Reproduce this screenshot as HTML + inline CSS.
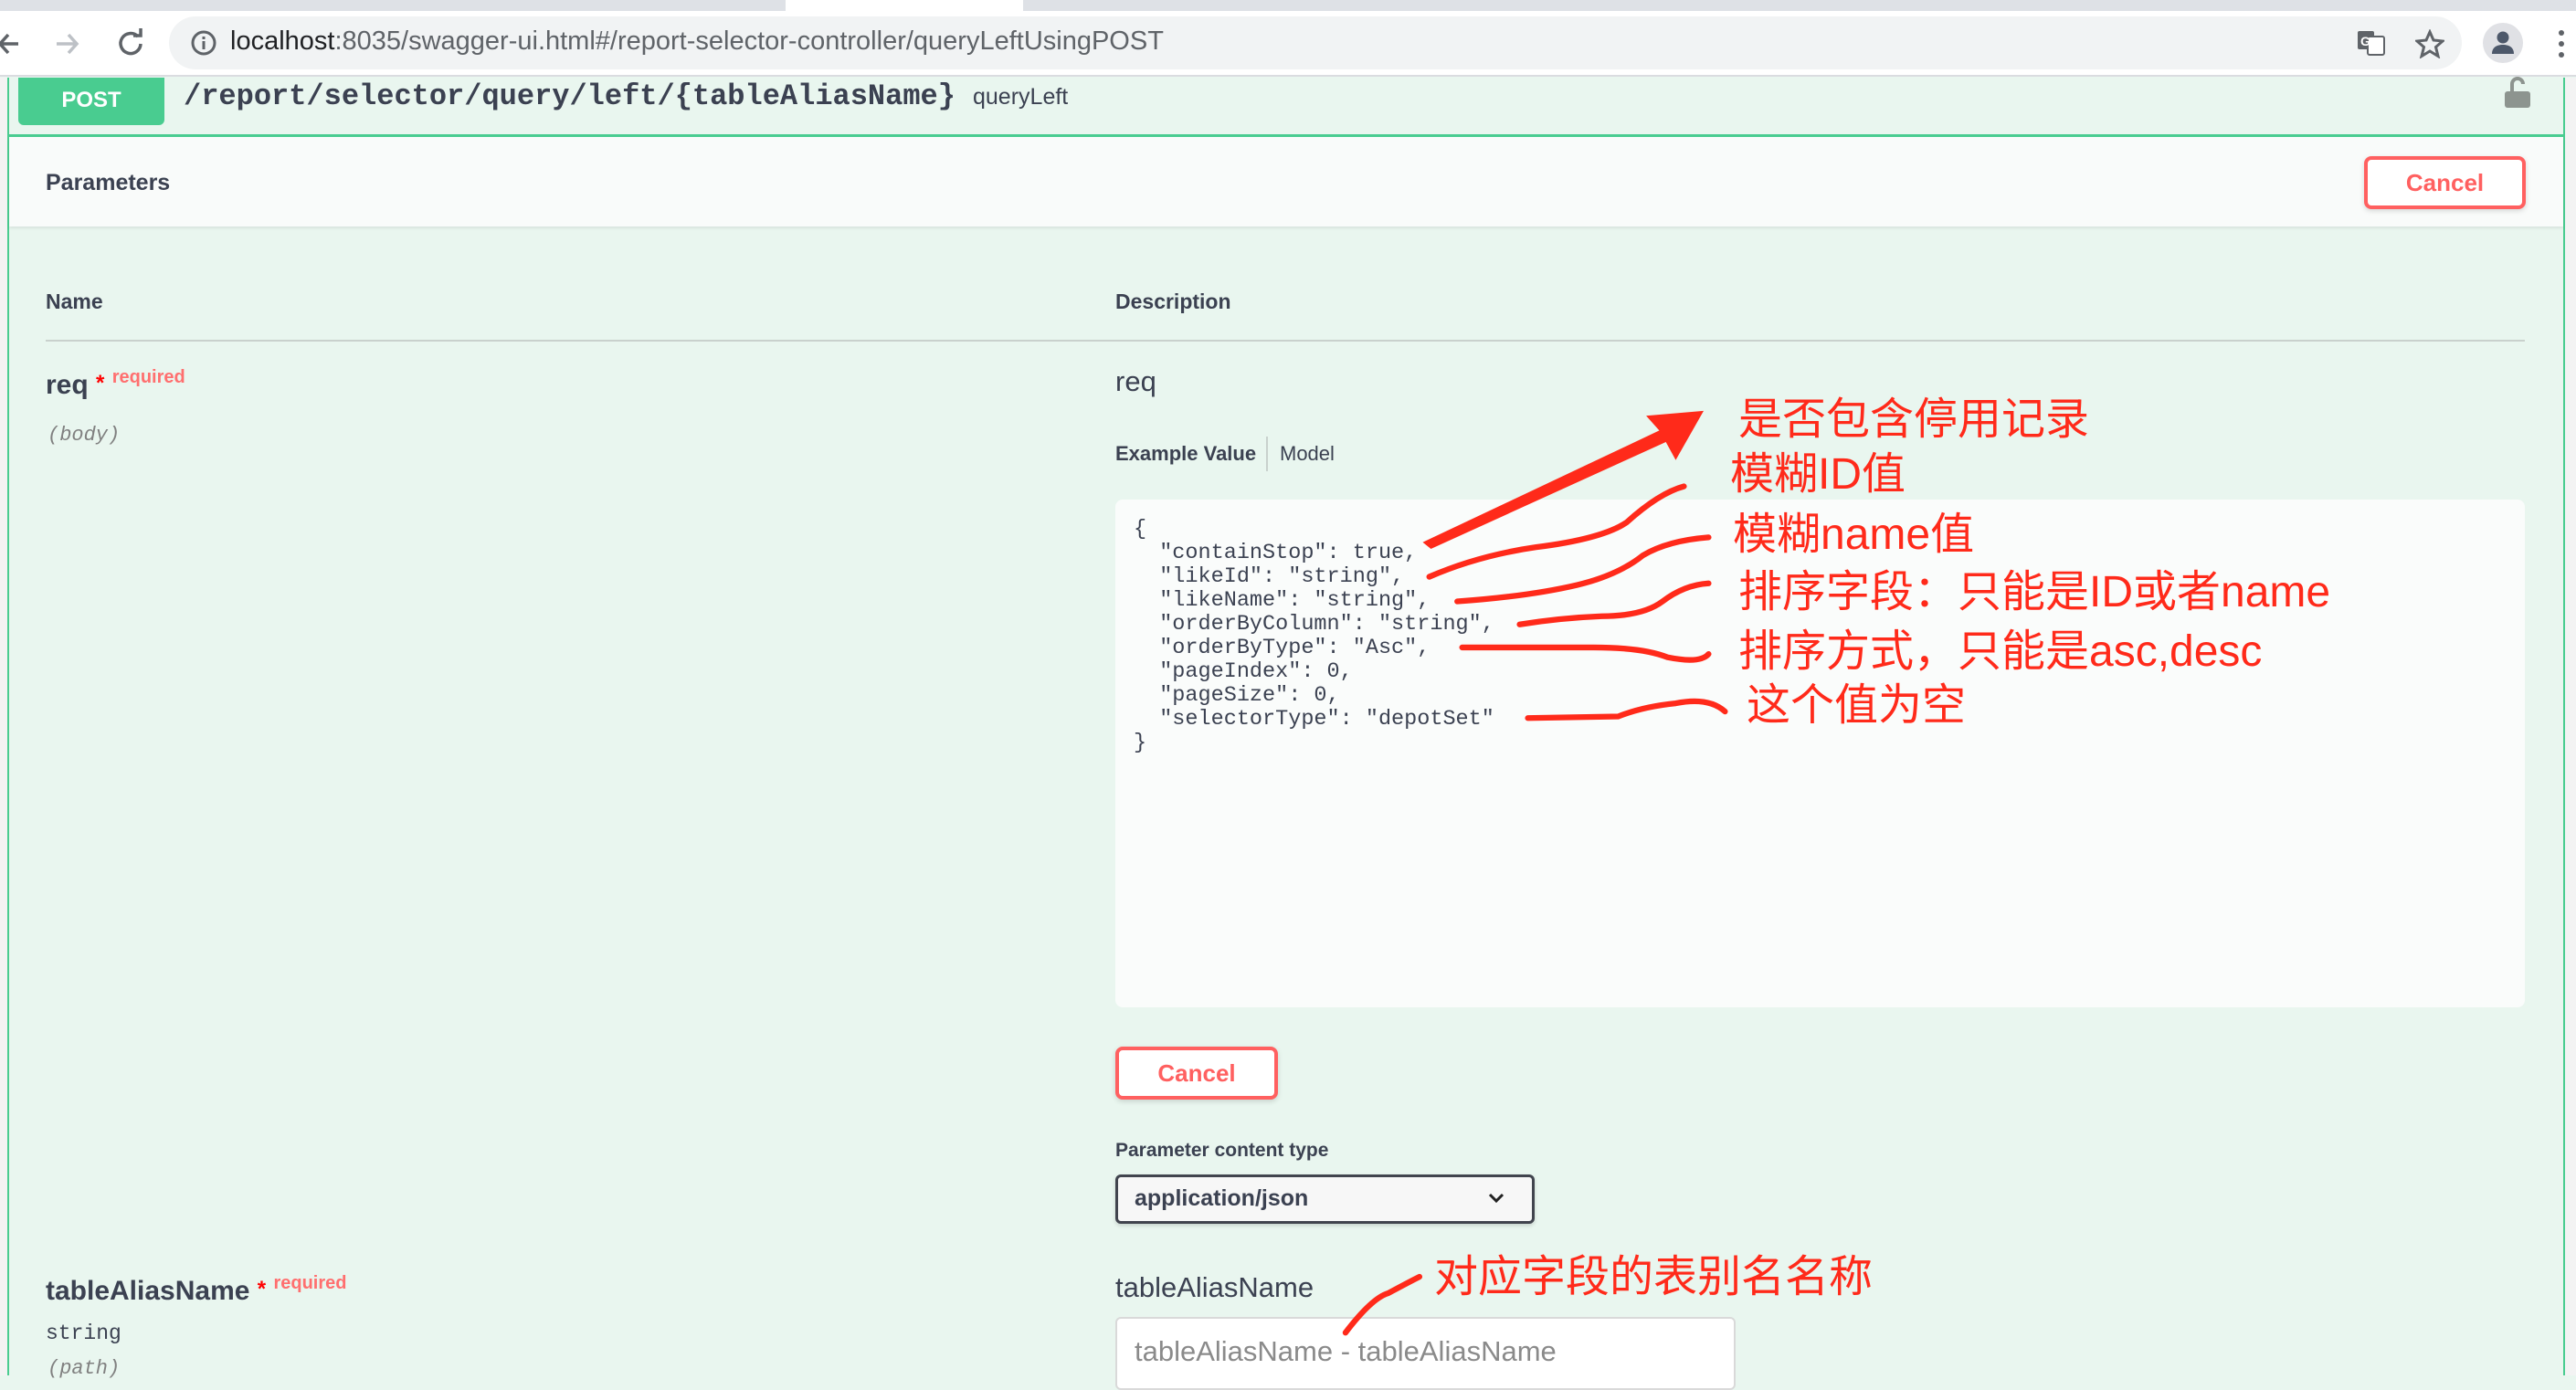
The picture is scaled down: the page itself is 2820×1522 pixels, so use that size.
<!DOCTYPE html>
<html><head><meta charset="utf-8"><style>
*{margin:0;padding:0;box-sizing:border-box}
body{width:2820px;height:1506px;overflow:hidden;position:relative;background:#e9f6ef;font-family:"Liberation Sans","Noto Sans CJK SC",sans-serif;color:#3b4151}
.a{position:absolute;white-space:nowrap}
.mono{font-family:"Liberation Mono","DejaVu Sans Mono",monospace}
.btn{position:absolute;border:4px solid #ff6060;border-radius:8px;background:#fff;color:#ff6060;font-weight:bold;font-size:26px;display:flex;align-items:center;justify-content:center;box-shadow:0 2px 6px rgba(0,0,0,.15)}
.red{position:absolute;color:#ff2a1a;font-size:48px;white-space:nowrap;font-family:"Liberation Sans","Noto Sans CJK SC",sans-serif;line-height:1}
</style></head><body>
<div class="a" style="left:0;top:0;width:2820px;height:14px;background:#dee1e6"></div>
<div class="a" style="left:860px;top:0;width:260px;height:14px;background:#fff"></div>
<div class="a" style="left:0;top:12px;width:2820px;height:72px;background:#fff;border-bottom:2px solid #dadce0"></div>
<svg class="a" style="left:0;top:28px" width="170" height="40" viewBox="0 0 170 40"><g fill="none" stroke-width="3.5"><path d="M20 20H0M9 10L0 20 9 30" stroke="#5f6368"/><path d="M62 20h22M75 10l9 10-9 10" stroke="#bdc1c6"/><path d="M151 12a11 11 0 1 0 3 8" stroke="#5f6368"/><path d="M146 11h8v-8" stroke="#5f6368"/></g></svg>
<div class="a" style="left:185px;top:18px;width:2510px;height:58px;background:#f1f3f4;border-radius:29px"></div>
<svg class="a" style="left:208px;top:32px" width="30" height="30"><circle cx="15" cy="15" r="12" fill="none" stroke="#5f6368" stroke-width="3"/><rect x="13.5" y="13" width="3" height="9" fill="#5f6368"/><rect x="13.5" y="8" width="3" height="3" fill="#5f6368"/></svg>
<div class="a" style="left:252px;top:29px;font-size:29px;color:#202124">localhost<span style="color:#5f6368">:8035/swagger-ui.html#/report-selector-controller/queryLeftUsingPOST</span></div>
<svg class="a" style="left:2580px;top:32px" width="32" height="30"><rect x="1" y="2" width="18" height="20" rx="2" fill="#5f6368"/><rect x="12" y="8" width="18" height="20" rx="2" fill="#fff" stroke="#5f6368" stroke-width="2"/><text x="4" y="18" font-size="14" font-weight="bold" fill="#fff" font-family="Liberation Sans">G</text></svg>
<svg class="a" style="left:2644px;top:32px" width="32" height="32"><path d="M16 3l4 9 10 1-7.5 6.5 2.5 10L16 24l-9 5.5 2.5-10L2 13l10-1z" fill="none" stroke="#5f6368" stroke-width="3"/></svg>
<div class="a" style="left:2718px;top:25px;width:44px;height:44px;border-radius:50%;background:#e0e1e5"></div>
<svg class="a" style="left:2726px;top:32px" width="28" height="28"><circle cx="14" cy="9" r="6.5" fill="#4d586a"/><path d="M2 27c0-7 5-10 12-10s12 3 12 10z" fill="#4d586a"/></svg>
<svg class="a" style="left:2798px;top:32px" width="12" height="32"><circle cx="6" cy="4" r="3" fill="#5f6368"/><circle cx="6" cy="16" r="3" fill="#5f6368"/><circle cx="6" cy="28" r="3" fill="#5f6368"/></svg>

<div class="a" style="left:0;top:85px;width:8px;height:1421px;background:#f3f3f3"></div>
<div class="a" style="left:2808px;top:85px;width:12px;height:1421px;background:#f3f3f3"></div>
<div class="a" style="left:8px;top:85px;width:2800px;height:1421px;border-left:2px solid #49cc90;border-right:2px solid #49cc90"></div>
<div class="a" style="left:20px;top:85px;width:160px;height:52px;background:#49cc90;border-radius:0 0 6px 6px;color:#fff;font-weight:bold;font-size:24px;text-align:center;line-height:50px">POST</div>
<div class="a mono" style="left:201px;top:87px;font-size:32px;font-weight:bold;color:#3b4151">/report/selector/query/left/{tableAliasName}</div>
<div class="a" style="left:1065px;top:92px;font-size:25px;color:#3b4151">queryLeft</div>
<svg class="a" style="left:2740px;top:84px" width="30" height="36"><path d="M10 16v-8a6 6 0 0 1 12 0" fill="none" stroke="#8d948f" stroke-width="4"/><rect x="2" y="16" width="28" height="18" rx="3" fill="#8d948f"/></svg>
<div class="a" style="left:10px;top:147px;width:2796px;height:3px;background:#49cc90"></div>
<div class="a" style="left:10px;top:150px;width:2796px;height:98px;background:#f9fbfa;box-shadow:0 2px 3px rgba(0,0,0,.08)"></div>
<div class="a" style="left:50px;top:186px;font-size:25px;font-weight:bold">Parameters</div>
<div class="btn" style="left:2588px;top:171px;width:177px;height:58px">Cancel</div>

<div class="a" style="left:50px;top:317px;font-size:23px;font-weight:bold">Name</div>
<div class="a" style="left:1221px;top:317px;font-size:23px;font-weight:bold">Description</div>
<div class="a" style="left:50px;top:372px;width:2714px;height:2px;background:#c9d1cd"></div>

<div class="a" style="left:50px;top:402px;font-size:30px;font-weight:bold">req <span style="color:red;font-size:24px;vertical-align:4px">*</span> <span style="color:#ff6f6f;font-size:20px;vertical-align:12px">required</span></div>
<div class="a mono" style="left:52px;top:464px;font-size:22px;font-style:italic;color:#808080">(body)</div>
<div class="a" style="left:1221px;top:400px;font-size:31px">req</div>
<div class="a" style="left:1221px;top:484px;font-size:22px;font-weight:bold">Example Value</div>
<div class="a" style="left:1386px;top:478px;width:2px;height:38px;background:#c9d1cd"></div>
<div class="a" style="left:1401px;top:484px;font-size:22px">Model</div>
<div class="a" style="left:1221px;top:547px;width:1543px;height:556px;background:#fafcfb;border-radius:8px"></div>
<pre class="a mono" style="left:1241px;top:567px;font-size:23.5px;line-height:26px;color:#3b4151;white-space:pre">{
  "containStop": true,
  "likeId": "string",
  "likeName": "string",
  "orderByColumn": "string",
  "orderByType": "Asc",
  "pageIndex": 0,
  "pageSize": 0,
  "selectorType": "depotSet"
}</pre>
<div class="btn" style="left:1221px;top:1146px;width:178px;height:58px">Cancel</div>
<div class="a" style="left:1221px;top:1248px;font-size:21px;font-weight:bold">Parameter content type</div>
<div class="a" style="left:1221px;top:1286px;width:459px;height:54px;border:3px solid #41444e;border-radius:6px;background:#f7f7f7;box-shadow:0 2px 4px rgba(0,0,0,.15)"></div>
<div class="a" style="left:1242px;top:1298px;font-size:25px;font-weight:bold">application/json</div>
<svg class="a" style="left:1628px;top:1304px" width="20" height="16"><path d="M3 4l7 7 7-7" fill="none" stroke="#222" stroke-width="3"/></svg>

<div class="a" style="left:50px;top:1394px;font-size:30px;font-weight:bold">tableAliasName <span style="color:red;font-size:24px;vertical-align:4px">*</span> <span style="color:#ff6f6f;font-size:20px;vertical-align:12px">required</span></div>
<div class="a mono" style="left:50px;top:1447px;font-size:23px">string</div>
<div class="a mono" style="left:52px;top:1486px;font-size:22px;font-style:italic;color:#808080">(path)</div>
<div class="a" style="left:1221px;top:1392px;font-size:31px">tableAliasName</div>
<div class="a" style="left:1221px;top:1442px;width:679px;height:80px;background:#fff;border:2px solid #d9d9d9;border-radius:6px"></div>
<div class="a" style="left:1242px;top:1462px;font-size:31px;color:#8a8a8a">tableAliasName - tableAliasName</div>

<svg class="a" style="left:0;top:0" width="2820" height="1506" viewBox="0 0 1568 837" preserveAspectRatio="none">
<g fill="none" stroke="#ff2a1a" stroke-width="3.5" stroke-linecap="round">
<path d="M870 351Q900 338 935 333Q975 328 990 318Q1010 300 1025 296"/>
<path d="M887 366Q930 363 960 356Q985 350 1000 338Q1015 329 1040 327"/>
<path d="M925 380Q950 376 975 375Q1000 375 1012 366Q1025 356 1040 355"/>
<path d="M890 394L970 394Q1000 394 1015 400Q1035 404 1040 398"/>
<path d="M930 437L985 436Q1000 430 1020 428Q1040 424 1050 433"/>
<path d="M819 811Q835 790 845 787Q858 780 864 777"/>
</g>
<path d="M866 330L1010 262L1002 253L1037 250L1020 280L1014 269L871 334Z" fill="#ff2a1a"/>
</svg>
<div class="red" style="left:1903px;top:436px">是否包含停用记录</div>
<div class="red" style="left:1894px;top:496px">模糊ID值</div>
<div class="red" style="left:1897px;top:562px">模糊name值</div>
<div class="red" style="left:1903px;top:625px">排序字段：只能是ID或者name</div>
<div class="red" style="left:1903px;top:690px">排序方式，只能是asc,desc</div>
<div class="red" style="left:1912px;top:749px">这个值为空</div>
<div class="red" style="left:1570px;top:1375px">对应字段的表别名名称</div>
</body></html>
